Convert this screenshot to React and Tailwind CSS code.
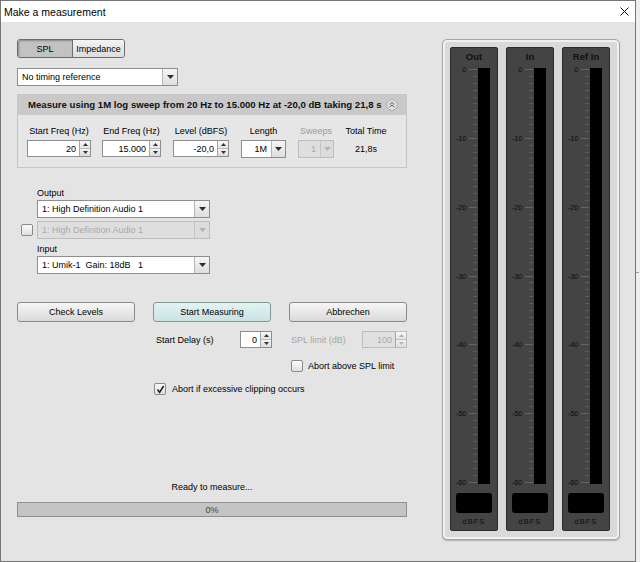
import React from "react";

function Tri({ c = "#2b2b2b" }) {
  return (
    <svg width="7" height="4" viewBox="0 0 7 4">
      <path d="M0 0H7L3.5 4Z" fill={c} />
    </svg>
  );
}

function SpinArrows({ disabled }) {
  const c = disabled ? "#b4b4b4" : "#333333";
  return (
    <div className="flex w-[11px] flex-col border-l border-[#a6a6a6]">
      <div className="flex flex-1 items-center justify-center border-b border-[#bdbdbd] bg-gradient-to-b from-[#f8f8f8] to-[#e4e4e4]">
        <svg width="5" height="3" viewBox="0 0 5 3">
          <path d="M0 3H5L2.5 0Z" fill={c} />
        </svg>
      </div>
      <div className="flex flex-1 items-center justify-center bg-gradient-to-b from-[#f2f2f2] to-[#dcdcdc]">
        <svg width="5" height="3" viewBox="0 0 5 3">
          <path d="M0 0H5L2.5 3Z" fill={c} />
        </svg>
      </div>
    </div>
  );
}

function Spin({ value, w, disabled }) {
  return (
    <div
      className={`flex h-[17px] ${w} border ${
        disabled
          ? "border-[#bcbcbc] bg-[#e0e0e0] text-[#aaaaaa]"
          : "border-[#8e8e8e] bg-white text-black"
      }`}
    >
      <div className="flex flex-1 items-center justify-end pr-[3px]">{value}</div>
      <SpinArrows disabled={disabled} />
    </div>
  );
}

function Combo({ text, w, disabled, right, arrowW = "w-[15px]" }) {
  return (
    <div
      className={`flex h-[18px] ${w} border ${
        disabled ? "border-[#bdbdbd] bg-[#dedede]" : "border-[#8e8e8e] bg-white"
      }`}
    >
      <div
        className={`flex flex-1 items-center whitespace-pre ${right ? "justify-end pr-[4px]" : "pl-[4px]"} ${
          disabled ? "text-[#a9a9a9]" : "text-black"
        }`}
      >
        {text}
      </div>
      <div
        className={`flex ${arrowW} items-center justify-center border-l ${
          disabled
            ? "border-[#c4c4c4] bg-[#dcdcdc]"
            : "border-[#b4b4b4] bg-gradient-to-b from-[#f6f6f6] to-[#dedede]"
        }`}
      >
        <Tri c={disabled ? "#b2b2b2" : "#2e2e2e"} />
      </div>
    </div>
  );
}

function Button({ children, teal }) {
  return (
    <div
      className={`flex h-[20px] w-[118px] items-center justify-center rounded-[3px] border ${
        teal
          ? "border-[#7f9898] bg-gradient-to-b from-[#e2f3f3] to-[#cae3e3]"
          : "border-[#8a8a8a] bg-gradient-to-b from-[#f6f6f6] to-[#dadada]"
      }`}
    >
      {children}
    </div>
  );
}

function Check({ checked }) {
  return (
    <div className="flex h-[12px] w-[12px] items-center justify-center rounded-[2px] border border-[#8a8a8a] bg-gradient-to-b from-[#fbfbfb] to-[#e0e0e0]">
      {checked && (
        <svg width="9" height="9" viewBox="0 0 9 9">
          <path d="M1.5 4.5L3.6 7.4L7.6 1" stroke="#222" strokeWidth="1.6" fill="none" />
        </svg>
      )}
    </div>
  );
}

function Meter({ title }) {
  const ticks = [];
  const labels = [];
  for (let i = 0; i <= 60; i++) {
    const y = Math.round(6 + (i * 413) / 60) + 0.5;
    const major = i % 10 === 0;
    ticks.push(
      <line
        key={i}
        x1={major ? 18 : 22}
        x2={26}
        y1={y}
        y2={y}
        stroke={major ? "#666666" : "#5c5c5c"}
        strokeWidth="1"
      />
    );
    if (major) {
      labels.push(
        <text key={"t" + i} x="15.5" y={y + 2.6} textAnchor="end" fontSize="7.5" fill="#0c0c0c">
          {i === 0 ? "0" : "-" + i}
        </text>
      );
    }
  }
  return (
    <div className="flex h-[484px] w-[48px] flex-col items-center rounded-[2px] border border-[#2c2c2c] bg-[#444444]">
      <div className="mt-[3px] h-[12px] whitespace-nowrap text-[9.5px] font-bold leading-[12px] text-[#111]">{title}</div>
      <svg width="46" height="430" viewBox="0 0 46 430" className="block">
        {ticks}
        {labels}
        <rect x="27" y="5" width="12" height="416" fill="#000" />
      </svg>
      <div className="h-[20px] w-[36px] rounded-[3px] bg-black" />
      <div className="mt-[4px] h-[10px] text-[7.5px] leading-[10px] tracking-[1px] text-[#0e0e0e]">dBFS</div>
    </div>
  );
}

export default function App() {
  return (
    <div className="flex h-[562px] w-[640px] bg-[#eeeeee] text-[9px] leading-[12px] text-black [font-family:'Liberation_Sans',Arial,sans-serif]">
      <div className="flex h-[562px] w-[636px] flex-col border border-[#767676]">
        {/* title bar */}
        <div className="flex h-[21px] items-center justify-between bg-white pl-[3px] pr-[6px]">
          <span className="text-[10.5px] text-black">Make a measurement</span>
          <svg width="9" height="9" viewBox="0 0 9 9">
            <path d="M0.5 0.5L8.5 8.5M8.5 0.5L0.5 8.5" stroke="#111" strokeWidth="1" />
          </svg>
        </div>
        {/* content */}
        <div className="flex flex-1 bg-[#e4e4e4] pl-[16px]">
          {/* left column */}
          <div className="flex w-[390px] flex-col">
            {/* toggle */}
            <div className="mt-[17px] flex h-[19px] w-[108px] overflow-hidden rounded-[3px] border border-[#6c6c6c]">
              <div className="flex w-[55px] items-center justify-center border-r border-[#6c6c6c] bg-[#c2c2c2] shadow-[inset_1px_1px_2px_#8a8a8a]">
                SPL
              </div>
              <div className="flex flex-1 items-center justify-center bg-gradient-to-b from-[#f4f4f4] to-[#dcdcdc]">
                Impedance
              </div>
            </div>
            {/* timing */}
            <div className="mt-[10px]">
              <Combo text="No timing reference" w="w-[161px]" />
            </div>
            {/* measure panel */}
            <div className="mt-[8px] flex flex-col border border-[#c6c6c6] bg-[#e6e6e6]">
              <div className="flex h-[20px] items-center justify-between bg-[#c9c9c9] pl-[10px] pr-[8px]">
                <span className="whitespace-nowrap text-[9.6px] font-bold text-[#111]">
                  Measure using 1M log sweep from 20 Hz to 15.000 Hz at -20,0 dB taking 21,8 s
                </span>
                <svg width="12" height="12" viewBox="0 0 12 12">
                  <circle cx="6" cy="6" r="5.3" fill="#e2e2e2" stroke="#a4a4a4" strokeWidth="0.8" />
                  <path d="M3.6 5.6L6 3.4L8.4 5.6M3.6 8.2L6 6L8.4 8.2" stroke="#444" strokeWidth="0.9" fill="none" />
                </svg>
              </div>
              <div className="flex pb-[9px] pl-[9px] pt-[10px]">
                <div className="flex w-[64px] flex-col items-center">
                  <div className="h-[12px] whitespace-nowrap">Start Freq (Hz)</div>
                  <div className="mt-[3px]">
                    <Spin value="20" w="w-[64px]" />
                  </div>
                </div>
                <div className="ml-[11px] flex w-[59px] flex-col items-center">
                  <div className="h-[12px] whitespace-nowrap">End Freq (Hz)</div>
                  <div className="mt-[3px]">
                    <Spin value="15.000" w="w-[59px]" />
                  </div>
                </div>
                <div className="ml-[12px] flex w-[56px] flex-col items-center">
                  <div className="h-[12px] whitespace-nowrap">Level (dBFS)</div>
                  <div className="mt-[3px]">
                    <Spin value="-20,0" w="w-[56px]" />
                  </div>
                </div>
                <div className="ml-[12px] flex w-[45px] flex-col items-center">
                  <div className="h-[12px]">Length</div>
                  <div className="mt-[3px]">
                    <Combo text="1M" w="w-[45px]" right arrowW="w-[14px]" />
                  </div>
                </div>
                <div className="ml-[12px] flex w-[36px] flex-col items-center">
                  <div className="h-[12px] text-[#9a9a9a]">Sweeps</div>
                  <div className="mt-[3px]">
                    <Combo text="1" w="w-[36px]" right disabled arrowW="w-[13px]" />
                  </div>
                </div>
                <div className="ml-[11px] flex w-[42px] flex-col items-center">
                  <div className="h-[12px] whitespace-nowrap">Total Time</div>
                  <div className="mt-[3px] flex h-[17px] items-center">21,8s</div>
                </div>
              </div>
            </div>
            {/* output/input */}
            <div className="mt-[19px] h-[12px] pl-[20px]">Output</div>
            <div className="mt-[1px] pl-[20px]">
              <Combo text="1: High Definition Audio 1" w="w-[173px]" />
            </div>
            <div className="mt-[3px] flex items-center">
              <div className="ml-[4px]">
                <Check />
              </div>
              <div className="ml-[4px]">
                <Combo text="1: High Definition Audio 1" w="w-[173px]" disabled />
              </div>
            </div>
            <div className="mt-[4px] h-[12px] pl-[20px]">Input</div>
            <div className="mt-[1px] pl-[20px]">
              <Combo text="1: Umik-1  Gain: 18dB   1" w="w-[173px]" />
            </div>
            {/* buttons */}
            <div className="mt-[28px] flex gap-[18px]">
              <Button>Check Levels</Button>
              <Button teal>Start Measuring</Button>
              <Button>Abbrechen</Button>
            </div>
            {/* start delay row */}
            <div className="mt-[9px] flex h-[17px] items-center">
              <div className="ml-[139px] w-[84px] whitespace-nowrap">Start Delay (s)</div>
              <Spin value="0" w="w-[32px]" />
              <div className="ml-[19px] w-[71px] whitespace-nowrap text-[#a6a6a6]">SPL limit (dB)</div>
              <Spin value="100" w="w-[45px]" disabled />
            </div>
            <div className="mt-[12px] flex h-[12px] items-center">
              <div className="ml-[274px]">
                <Check />
              </div>
              <span className="ml-[5px] whitespace-nowrap">Abort above SPL limit</span>
            </div>
            <div className="mt-[11px] flex h-[12px] items-center">
              <div className="ml-[137px]">
                <Check checked />
              </div>
              <span className="ml-[6px] whitespace-nowrap">Abort if excessive clipping occurs</span>
            </div>
            <div className="mt-[86px] h-[12px] text-center">Ready to measure...</div>
            <div className="mt-[9px] flex h-[15px] items-center justify-center border border-[#909090] bg-[#c4c4c4] text-[#444]">
              0%
            </div>
          </div>
          {/* meter panel */}
          <div className="ml-[35px] mt-[17px] flex h-[501px] w-[178px] gap-[8px] rounded-[5px] border border-[#a6a6a6] bg-[#d9d9d9] pl-[7px] pt-[7px] shadow-[inset_0_0_0_2px_#f1f1f1,0_1px_1px_#b0b0b0]">
            <Meter title="Out" />
            <Meter title="In" />
            <Meter title="Ref In" />
          </div>
        </div>
      </div>
      <div className="flex w-[4px] flex-col bg-[#eeeeee]">
        <div className="mt-[272px] h-[1px] w-[3px] bg-[#9a9a9a]" />
      </div>
    </div>
  );
}
